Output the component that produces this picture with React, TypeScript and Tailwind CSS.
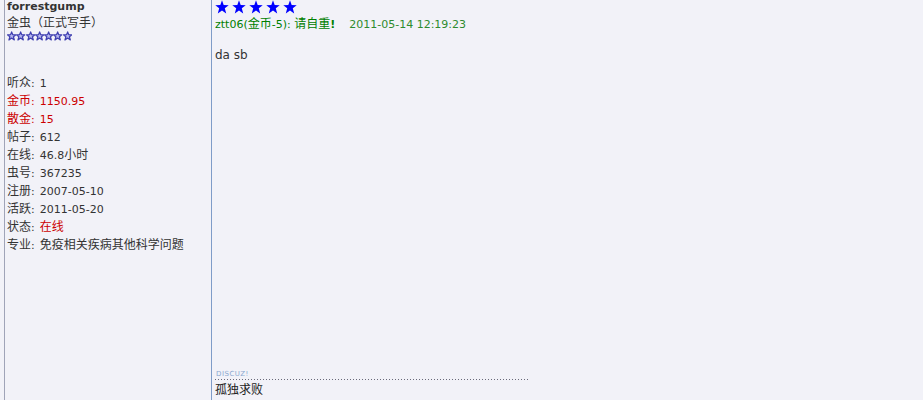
import React from "react";

const latin = { fontFamily: '"DejaVu Sans", "Noto Sans CJK SC", sans-serif' };
const cjk = { fontFamily: '"Noto Sans CJK SC", sans-serif' };

function Mixed({ text, size = 11 }: { text: string; size?: number }) {
  const parts = text.match(/[\u3000-\u9fff\uff00-\uffef]+|[^\u3000-\u9fff\uff00-\uffef]+/g) || [];
  return (
    <>
      {parts.map((p, i) =>
        /[\u3000-\u9fff\uff00-\uffef]/.test(p) ? (
          <span key={i} className="text-[12px]" style={cjk}>
            {p}
          </span>
        ) : (
          <span key={i} className={size === 12 ? "text-[12px]" : "text-[11px]"} style={latin}>
            {p}
          </span>
        )
      )}
    </>
  );
}

function SmallStar() {
  return (
    <svg width="9.3" height="10" viewBox="0 0 10 10" className="block">
      <path
        d="M5 0.6 L6.2 3.6 L9.5 3.7 L6.9 5.8 L7.9 9.3 L5 7.2 L2.1 9.3 L3.1 5.8 L0.5 3.7 L3.8 3.6 Z"
        fill="#b8b8f0"
        stroke="#4040b0"
        strokeWidth="1.3"
        strokeLinejoin="round"
      />
    </svg>
  );
}

function BlueStar() {
  return (
    <svg width="14" height="14" viewBox="0 0 10 10" className="block">
      <path
        d="M5 0.2 L6.2 3.6 L9.8 3.7 L7 5.9 L8 9.6 L5 7.5 L2 9.6 L3 5.9 L0.2 3.7 L3.8 3.6 Z"
        fill="#0000ff"
      />
    </svg>
  );
}

const rows: { k: string; v: string; red?: boolean; redVal?: boolean }[] = [
  { k: "听众", v: "1" },
  { k: "金币", v: "1150.95", red: true },
  { k: "散金", v: "15", red: true },
  { k: "帖子", v: "612" },
  { k: "在线", v: "46.8小时" },
  { k: "虫号", v: "367235" },
  { k: "注册", v: "2007-05-10" },
  { k: "活跃", v: "2011-05-20" },
  { k: "状态", v: "在线", redVal: true },
  { k: "专业", v: "免疫相关疾病其他科学问题" },
];

export default function App() {
  return (
    <div className="w-[923px] h-[400px] bg-[#f2f2f8] overflow-hidden text-[12px] text-[#333]" style={latin}>
      <div className="ml-[4px] flex h-full border-l border-[#a0a4b8]">
        <div className="w-[207px] shrink-0 border-r border-[#7f9cc8] pl-[2px]">
          <div className="text-[11px] font-bold leading-[14px] h-[14px] text-[#333]" style={latin}>forrestgump</div>
          <div className="leading-[16px] h-[16px]">
            <Mixed text="金虫（正式写手）" />
          </div>
          <div className="flex mt-[1px]">
            {Array.from({ length: 7 }).map((_, i) => (
              <SmallStar key={i} />
            ))}
          </div>
          <div className="mt-[32px] flex flex-col">
            {rows.map((r) => (
              <div key={r.k} className="leading-[18px] h-[18px] whitespace-nowrap">
                <span className={r.red ? "text-[#cc0000]" : ""}>
                  <Mixed text={r.k} />
                  <Mixed text=":" />
                </span>
                <span className={r.red || r.redVal ? "ml-[5px] text-[#cc0000]" : "ml-[5px]"}>
                  <Mixed text={r.v} />
                </span>
              </div>
            ))}
          </div>
        </div>
        <div className="flex-1 flex flex-col pl-[3px]">
          <div className="flex gap-[3px]">
            {Array.from({ length: 5 }).map((_, i) => (
              <BlueStar key={i} />
            ))}
          </div>
          <div className="leading-[16px] h-[16px] mt-[1px] text-[#008000] whitespace-nowrap">
            <Mixed text="ztt06(金币-5): 请自重" />
            <span className="text-[11px] font-bold" style={latin}>!</span>
            <span className="ml-[14px] text-[#2e8b2e]">
              <Mixed text="2011-05-14 12:19:23" />
            </span>
          </div>
          <div className="mt-[16px] text-[12px] leading-[16px] text-[#333]" style={latin}>da sb</div>
          <div className="flex-1" />
          <div className="w-[313px] relative h-[10px]">
            <span className="absolute left-[1px] top-[0px] text-[7px] leading-[7px] text-[#8aa8d0] tracking-[0.5px]" style={latin}>DISCUZ!</span>
            <div className="absolute left-0 right-0 bottom-[1px] h-[1px] bg-[linear-gradient(to_right,#6a6a7a_1px,transparent_1px)] bg-[length:3px_1px]" />
          </div>
          <div className="leading-[16px] h-[16px] mb-[3px] text-[#222]">
            <Mixed text="孤独求败" />
          </div>
        </div>
      </div>
    </div>
  );
}
